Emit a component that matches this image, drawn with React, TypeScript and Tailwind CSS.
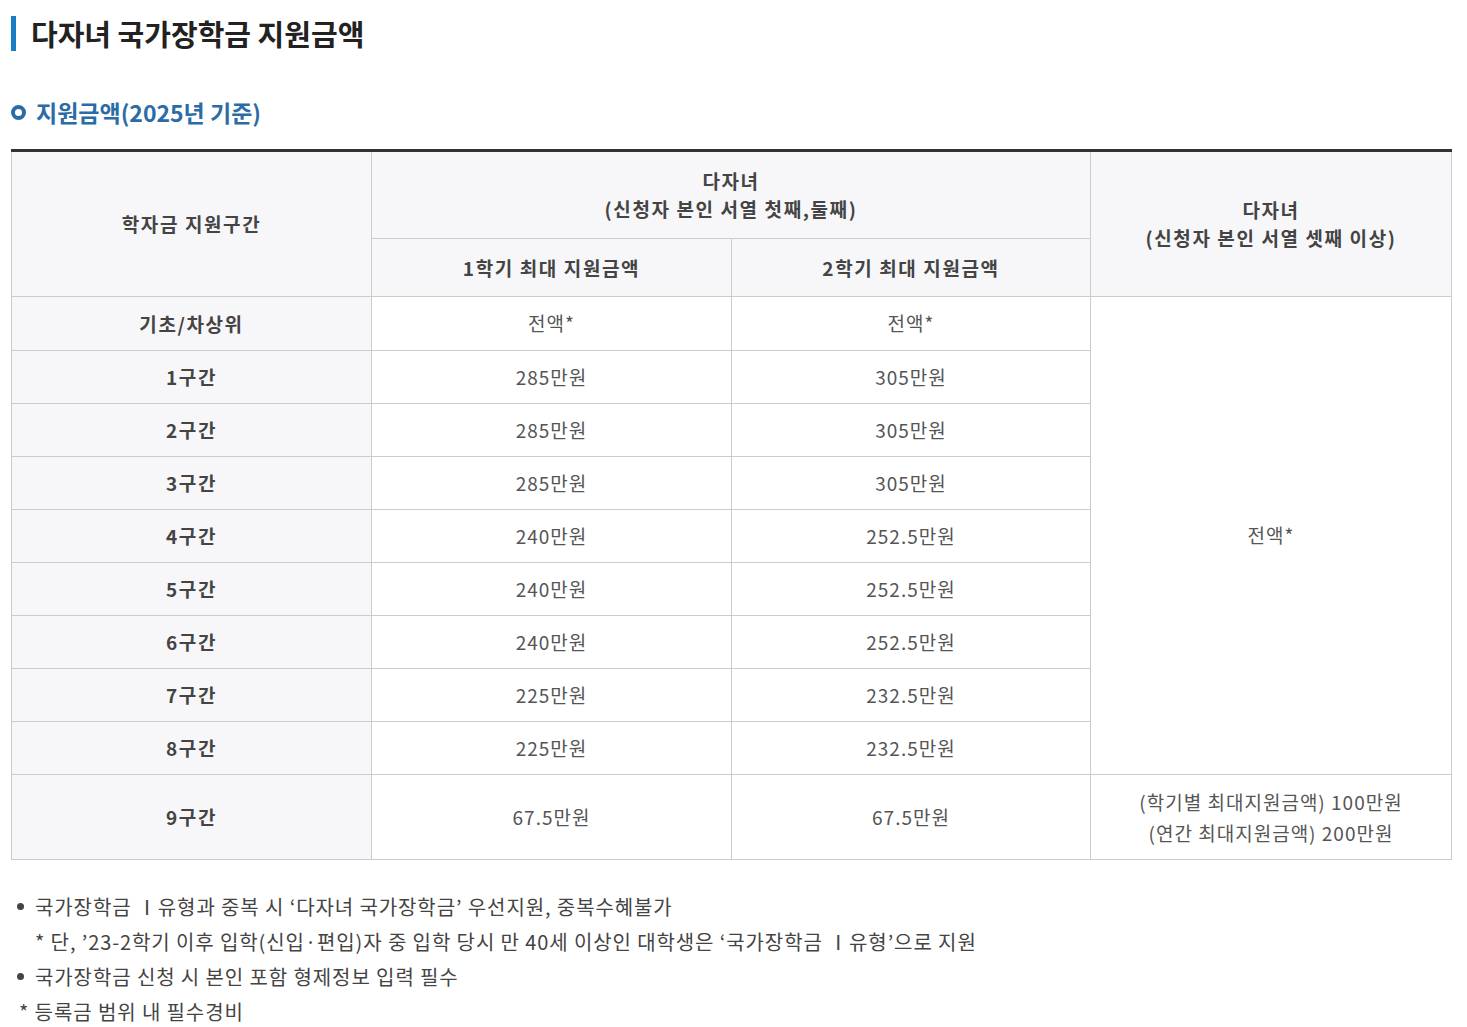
import React from "react";

const rows = [
  { label: "1구간", first: "285만원", second: "305만원" },
  { label: "2구간", first: "285만원", second: "305만원" },
  { label: "3구간", first: "285만원", second: "305만원" },
  { label: "4구간", first: "240만원", second: "252.5만원" },
  { label: "5구간", first: "240만원", second: "252.5만원" },
  { label: "6구간", first: "240만원", second: "252.5만원" },
  { label: "7구간", first: "225만원", second: "232.5만원" },
  { label: "8구간", first: "225만원", second: "232.5만원" },
];

const th = "border border-[#cccccc] bg-[#f7f7f9] text-[19px] font-bold text-[#444444] text-center align-middle leading-[28px] tracking-[1.6px]";
const td = "border border-[#cccccc] bg-white text-[19px] text-[#555555] text-center align-middle tracking-[1px]";

const App = () => {
  return (
    <div className="w-[1467px] bg-white px-[11px] pt-[15px] pb-4 font-['Noto_Sans_CJK_KR','Noto_Sans',sans-serif]">
      <div className="flex items-center h-[36px]">
        <div className="w-[5px] h-[35px] bg-[#1a7cc4]" />
        <h1 className="ml-[15px] text-[29px] font-bold text-[#222222] leading-none">다자녀 국가장학금 지원금액</h1>
      </div>

      <div className="flex items-center mt-[44px] h-[34px]">
        <span className="w-[15px] h-[15px] rounded-full border-[4px] border-[#2b6ca6] bg-white" />
        <h2 className="ml-[10px] text-[23px] font-bold text-[#2b6ca6] leading-none">지원금액(2025년 기준)</h2>
      </div>

      <table className="mt-[20px] w-[1440px] border-collapse table-fixed border-t-[3px] border-t-[#333333]">
        <colgroup>
          <col className="w-[360px]" />
          <col className="w-[360px]" />
          <col className="w-[359px]" />
          <col className="w-[361px]" />
        </colgroup>
        <thead>
          <tr className="h-[88px]">
            <th rowSpan={2} className={th + " border-t-0"}>학자금 지원구간</th>
            <th colSpan={2} className={th + " border-t-0"}>
              다자녀
              <br />
              (신청자 본인 서열 첫째,둘째)
            </th>
            <th rowSpan={2} className={th + " border-t-0"}>
              다자녀
              <br />
              (신청자 본인 서열 셋째 이상)
            </th>
          </tr>
          <tr className="h-[58px]">
            <th className={th}>1학기 최대 지원금액</th>
            <th className={th}>2학기 최대 지원금액</th>
          </tr>
        </thead>
        <tbody>
          <tr className="h-[54px]">
            <th className={th}>기초/차상위</th>
            <td className={td}>전액*</td>
            <td className={td}>전액*</td>
            <td rowSpan={9} className={td}>전액*</td>
          </tr>
          {rows.map((r) => (
            <tr key={r.label} className="h-[53px]">
              <th className={th}>{r.label}</th>
              <td className={td}>{r.first}</td>
              <td className={td}>{r.second}</td>
            </tr>
          ))}
          <tr className="h-[85px]">
            <th className={th}>9구간</th>
            <td className={td}>67.5만원</td>
            <td className={td}>67.5만원</td>
            <td className={td + " leading-[31px]"}>
              (학기별 최대지원금액) 100만원
              <br />
              (연간 최대지원금액) 200만원
            </td>
          </tr>
        </tbody>
      </table>

      <ul className="mt-[29px] text-[20px] text-[#444444] leading-[35px] tracking-[0.9px]">
        <li className="flex items-center">
          <span className="w-[7px] h-[7px] rounded-full bg-[#444444] ml-[6px] mr-[11px]" />
          국가장학금 Ⅰ유형과 중복 시 ‘다자녀 국가장학금’ 우선지원, 중복수혜불가
        </li>
        <li className="pl-[24px]">* 단, ’23-2학기 이후 입학(신입·편입)자 중 입학 당시 만 40세 이상인 대학생은 ‘국가장학금 Ⅰ유형’으로 지원</li>
        <li className="flex items-center">
          <span className="w-[7px] h-[7px] rounded-full bg-[#444444] ml-[6px] mr-[11px]" />
          국가장학금 신청 시 본인 포함 형제정보 입력 필수
        </li>
        <li className="pl-[8px]">* 등록금 범위 내 필수경비</li>
      </ul>
    </div>
  );
};

export default App;
